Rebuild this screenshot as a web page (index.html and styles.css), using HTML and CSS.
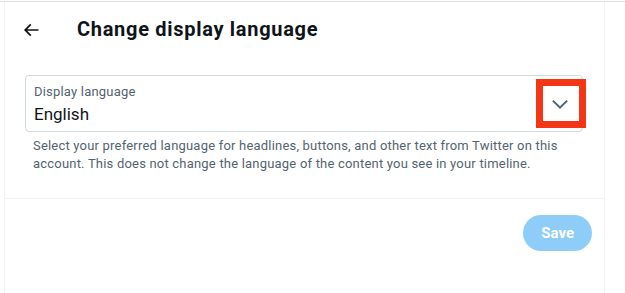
FILE: index.html
```html
<!DOCTYPE html>
<html lang="en">

<head>
    <meta charset="UTF-8">
    <meta name="viewport" content="width=device-width, initial-scale=1.0">
    <title>Change display language</title>
    <link rel="stylesheet" href="styles.css">
</head>

<body>
    <div class="frame">
        <main class="panel">
            <header class="header">
                <div class="back">
                    <svg class="back-icon" viewBox="0 0 24 24" aria-hidden="true">
                        <path d="M7.414 13l5.043 5.04-1.414 1.42L3.586 12l7.457-7.46 1.414 1.42L7.414 11H21v2H7.414z"></path>
                    </svg>
                </div>
                <h2 class="title">Change display language</h2>
            </header>

            <section class="section">
                <div class="select">
                    <div class="select-text">
                        <div class="select-label">Display language</div>
                        <div class="select-value">English</div>
                    </div>
                    <svg class="chevron" viewBox="0 0 24 24" aria-hidden="true">
                        <path d="M3.543 8.96l1.414-1.42L12 14.59l7.043-7.05 1.414 1.42L12 17.41 3.543 8.96z"></path>
                    </svg>
                    <div class="highlight"></div>
                </div>
                <p class="help">Select your preferred language for headlines, buttons, and other text from Twitter on this account. This does not change the language of the content you see in your timeline.</p>
            </section>

            <div class="actions">
                <button class="save-btn" disabled>Save</button>
            </div>
        </main>
    </div>
</body>

</html>
```

FILE: styles.css
```css
* {
    padding: 0px;
    margin: 0px;
    box-sizing: border-box;
}

html,
body {
    height: 100%;
    background-color: #ffffff;
}

body {
    font-family: Roboto, "Liberation Sans", sans-serif;
    color: #0f1419;
}

.frame {
    height: 100%;
    margin-top: 1px;
    border-top: 1px solid #dde3e2;
}

.panel {
    width: 601px;
    height: 100%;
    margin-left: 4px;
    border-left: 1px solid #eff3f4;
    border-right: 1px solid #eff3f4;
}

.header {
    display: flex;
    align-items: center;
    height: 53px;
    padding: 0 16px;
}

.back {
    width: 56px;
    display: flex;
    align-items: center;
}

.back-icon {
    width: 20px;
    height: 20px;
    fill: #0f1419;
    margin-top: 3px;
}

.title {
    font-size: 20px;
    line-height: 24px;
    font-weight: 700;
    letter-spacing: 0.7px;
}

.section {
    padding: 20px 21px 25px 20px;
    border-bottom: 1px solid #eff3f4;
}

.select {
    position: relative;
    display: flex;
    align-items: center;
    height: 57px;
    border: 1px solid #cfd9de;
    border-radius: 4px;
    padding: 8px 11px 5px 8px;
}

.select-text {
    flex: 1;
    align-self: flex-start;
}

.select-label {
    font-size: 13px;
    line-height: 16px;
    letter-spacing: 0.2px;
    color: #536471;
}

.select-value {
    margin-top: 2px;
    font-size: 17px;
    line-height: 24px;
}

.chevron {
    width: 22px;
    height: 22px;
    fill: #536471;
    margin-top: -3px;
}

.highlight {
    position: absolute;
    top: 3px;
    right: -4px;
    width: 50px;
    height: 49px;
    border: 7px solid #f43516;
}

.help {
    margin-top: 5px;
    padding: 0 8px;
    font-size: 13px;
    line-height: 18px;
    letter-spacing: 0.2px;
    color: #536471;
}

.actions {
    display: flex;
    justify-content: flex-end;
    padding: 16px 12px;
}

.save-btn {
    height: 36px;
    padding: 0 18px;
    border: none;
    border-radius: 18px;
    background-color: #8ecdf8;
    color: #ffffff;
    font-family: Roboto, "Liberation Sans", sans-serif;
    font-size: 15px;
    font-weight: 700;
}
```
